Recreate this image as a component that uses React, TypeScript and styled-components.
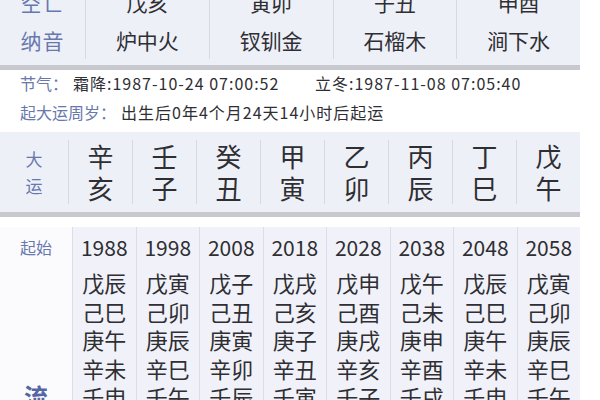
import React from "react";
import styled, { createGlobalStyle } from "styled-components";

const Global = createGlobalStyle`
  html, body { margin: 0; padding: 0; background: #ffffff; }
  body {
    width: 600px; height: 400px; overflow: hidden;
    font-family: "Noto Sans CJK SC", "Noto Sans", sans-serif;
    color: #2e2e33;
  }
`;

const Page = styled.div`
  width: 600px;
  height: 400px;
  overflow: hidden;
  background: #ffffff;
`;

const TopPanel = styled.div`
  width: 580px;
  margin-top: -17px;
  background: #eef0f8;
  border-bottom: 5px solid #c8c9cf;
  padding-bottom: 6px;
  display: grid;
  grid-template-columns: 85px repeat(4, 1fr);
`;

const TopCol = styled.div<{ $label?: boolean }>`
  display: flex;
  flex-direction: column;
  border-left: ${(p) => (p.$label ? "none" : "1px solid #d6d8e2")};
`;

const TopCell = styled.div<{ $label?: boolean }>`
  height: 38px;
  display: flex;
  align-items: center;
  justify-content: center;
  font-size: 21px;
  letter-spacing: ${(p) => (p.$label ? "1px" : "0")};
  color: ${(p) => (p.$label ? "#6878ad" : "#2e2e33")};
`;

const Info = styled.div`
  padding: 0 0 7px 20px;
  display: flex;
  flex-direction: column;
  gap: 3px;
`;

const InfoLine = styled.div`
  height: 26px;
  display: flex;
  align-items: center;
  font-size: 16px;
  white-space: nowrap;
`;

const InfoLabel = styled.span`
  color: #6878ad;
  margin-right: 5px;
`;

const InfoValue = styled.span<{ $w?: number }>`
  color: #2e2e33;
  letter-spacing: 1px;
  display: inline-block;
  width: ${(p) => (p.$w ? `${p.$w}px` : "auto")};
`;

const DayunPanel = styled.div`
  width: 580px;
  background: #eef0f8;
  border-bottom: 5px solid #c8c9cf;
  padding: 8px 0;
  display: grid;
  grid-template-columns: 68px repeat(8, 1fr);
`;

const DayunLabel = styled.div`
  display: flex;
  flex-direction: column;
  align-items: center;
  justify-content: center;
  font-size: 17px;
  line-height: 27px;
  color: #6878ad;
`;

const DayunCol = styled.div`
  border-left: 1px solid #d6d8e2;
  display: flex;
  flex-direction: column;
  align-items: center;
  justify-content: center;
  font-size: 26px;
  line-height: 32px;
  color: #2e2e33;
`;

const LiuPanel = styled.div`
  width: 580px;
  margin-top: 10px;
  display: grid;
  grid-template-columns: 72px repeat(8, 1fr);
`;

const LiuLabelCol = styled.div`
  display: flex;
  flex-direction: column;
  align-items: center;
  background: #fbfbfd;
`;

const StartLabel = styled.div`
  height: 40px;
  display: flex;
  align-items: center;
  font-size: 16px;
  color: #6878ad;
`;

const LiuLabel = styled.div`
  margin-top: 1px;
  height: 285px;
  display: flex;
  flex-direction: column;
  align-items: center;
  justify-content: center;
  font-size: 24px;
  line-height: 30px;
  font-weight: 700;
  color: #5566a3;
`;

const LiuCol = styled.div`
  background: #f1f2f9;
  border-left: 1px solid #dcdee7;
  display: flex;
  flex-direction: column;
  align-items: center;
`;

const Year = styled.div`
  height: 40px;
  display: flex;
  align-items: center;
  font-size: 21px;
  color: #2e2e33;
`;

const GzList = styled.div`
  margin-top: 1px;
  display: flex;
  flex-direction: column;
  align-items: center;
`;

const Gz = styled.div`
  height: 28.5px;
  line-height: 28.5px;
  font-size: 22px;
  color: #2e2e33;
`;

const STEMS = "甲乙丙丁戊己庚辛壬癸";
const BRANCHES = "子丑寅卯辰巳午未申酉戌亥";
const ganzhi = (y: number) => STEMS[(y - 4) % 10] + BRANCHES[(y - 4) % 12];

const topRows = [
  { label: "空亡", values: ["戊亥", "寅卯", "子丑", "申酉"] },
  { label: "纳音", values: ["炉中火", "钗钏金", "石榴木", "涧下水"] },
];

const dayun = ["辛亥", "壬子", "癸丑", "甲寅", "乙卯", "丙辰", "丁巳", "戊午"];
const startYears = [1988, 1998, 2008, 2018, 2028, 2038, 2048, 2058];

export default function App() {
  return (
    <Page>
      <Global />
      <TopPanel>
        <TopCol $label>
          {topRows.map((r) => (
            <TopCell $label key={r.label}>{r.label}</TopCell>
          ))}
        </TopCol>
        {[0, 1, 2, 3].map((i) => (
          <TopCol key={i}>
            {topRows.map((r) => (
              <TopCell key={r.label}>{r.values[i]}</TopCell>
            ))}
          </TopCol>
        ))}
      </TopPanel>

      <Info>
        <InfoLine>
          <InfoLabel>节气：</InfoLabel>
          <InfoValue $w={242}>霜降:1987-10-24 07:00:52</InfoValue>
          <InfoValue>立冬:1987-11-08 07:05:40</InfoValue>
        </InfoLine>
        <InfoLine>
          <InfoLabel>起大运周岁：</InfoLabel>
          <InfoValue>出生后0年4个月24天14小时后起运</InfoValue>
        </InfoLine>
      </Info>

      <DayunPanel>
        <DayunLabel>
          <span>大</span>
          <span>运</span>
        </DayunLabel>
        {dayun.map((d) => (
          <DayunCol key={d}>
            <span>{d[0]}</span>
            <span>{d[1]}</span>
          </DayunCol>
        ))}
      </DayunPanel>

      <LiuPanel>
        <LiuLabelCol>
          <StartLabel>起始</StartLabel>
          <LiuLabel>
            <span>流</span>
            <span>年</span>
          </LiuLabel>
        </LiuLabelCol>
        {startYears.map((y) => (
          <LiuCol key={y}>
            <Year>{y}</Year>
            <GzList>
              {Array.from({ length: 10 }, (_, k) => (
                <Gz key={k}>{ganzhi(y + k)}</Gz>
              ))}
            </GzList>
          </LiuCol>
        ))}
      </LiuPanel>
    </Page>
  );
}
